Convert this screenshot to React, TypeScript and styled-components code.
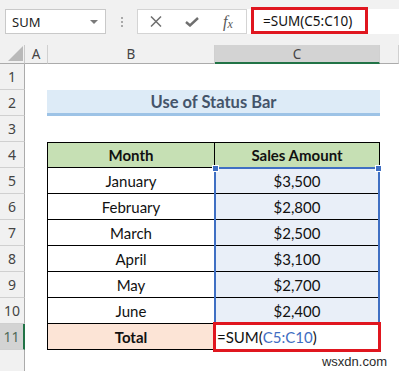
import React from 'react';
import styled, { createGlobalStyle } from 'styled-components';

const GlobalStyle = createGlobalStyle`
  html, body {
    margin: 0;
    padding: 0;
    background: #ffffff;
  }
  body {
    width: 399px;
    height: 371px;
    overflow: hidden;
    font-family: "Noto Sans", "Open Sans", sans-serif;
  }
  * {
    box-sizing: border-box;
  }
`;

const months = [
  { month: 'January', amount: '$3,500' },
  { month: 'February', amount: '$2,800' },
  { month: 'March', amount: '$2,500' },
  { month: 'April', amount: '$3,100' },
  { month: 'May', amount: '$2,700' },
  { month: 'June', amount: '$2,400' },
];

// grid row of a sheet row (grid row 1 is the column header)
const gr = (sheetRow: number) => sheetRow + 1;

const App: React.FC = () => {
  return (
    <>
      <GlobalStyle />
      <Window>
        <FormulaBar>
          <NameBox>
            <NameText>SUM</NameText>
            <DropArrow />
          </NameBox>
          <Grip>
            <Dot />
            <Dot />
            <Dot />
          </Grip>
          <ButtonBox>
            <IconSlot>
              <svg width="12" height="11" viewBox="0 0 12 11">
                <path d="M1 0.5 L11 10.5 M11 0.5 L1 10.5" stroke="#6f6f6f" strokeWidth="1.5" fill="none" />
              </svg>
            </IconSlot>
            <IconSlot>
              <svg width="14" height="10" viewBox="0 0 14 10">
                <path d="M1 5 L5 8.5 L13 1" stroke="#6f6f6f" strokeWidth="2.4" fill="none" />
              </svg>
            </IconSlot>
            <IconSlot>
              <Fx>
                f<FxSub>x</FxSub>
              </Fx>
            </IconSlot>
          </ButtonBox>
          <FormulaInput>
            <FormulaHighlight>=SUM(C5:C10)</FormulaHighlight>
          </FormulaInput>
        </FormulaBar>

        <Sheet>
          <Corner $c={1} $r={1}>
            <svg width="15" height="15" viewBox="0 0 15 15">
              <polygon points="15,0 15,15 0,15" fill="#b9b9b9" />
            </svg>
          </Corner>
          <ColHead $c={2} $r={1}>A</ColHead>
          <ColHead $c={3} $r={1}>B</ColHead>
          <ColHead $c={4} $r={1} $selected>
            C
          </ColHead>
          <ColHead $c={5} $r={1} />

          {Array.from({ length: 11 }, (_, i) => (
            <RowHead key={i} $c={1} $r={gr(i + 1)} $selected={i + 1 === 11}>
              {i + 1}
            </RowHead>
          ))}
          <RowHead $c={1} $r={13} $last />

          <TitleCell $c={3} $r={gr(2)}>
            Use of Status Bar
          </TitleCell>

          <TCell $c={3} $r={gr(4)} $first $top $bold $fill="#c6e0b4">
            Month
          </TCell>
          <TCell $c={4} $r={gr(4)} $top $bold $fill="#c6e0b4">
            Sales Amount
          </TCell>

          {months.map((m, i) => (
            <React.Fragment key={m.month}>
              <TCell $c={3} $r={gr(5 + i)} $first>
                {m.month}
              </TCell>
              <TCell $c={4} $r={gr(5 + i)} $fill="#e9eff8">
                {m.amount}
              </TCell>
            </React.Fragment>
          ))}

          <TCell $c={3} $r={gr(11)} $first $bold $fill="#fce4d6">
            Total
          </TCell>
          <EditCell $c={4} $r={gr(11)}>
            =SUM(<RefText>C5:C10</RefText>)
          </EditCell>

          <RangeFrame $c={4} $r={gr(5)} $span={6}>
            <Handle $side="left" />
            <Handle $side="right" />
          </RangeFrame>

          <Watermark>wsxdn.com</Watermark>
        </Sheet>
      </Window>
    </>
  );
};

type Place = { $c: number; $r: number };

const Window = styled.div`
  width: 399px;
  height: 371px;
  display: flex;
  flex-direction: column;
  background: #ffffff;
`;

const FormulaBar = styled.div`
  height: 45px;
  flex: none;
  display: flex;
  align-items: flex-start;
  padding-top: 9px;
  background: #f1f1f1;
`;

const NameBox = styled.div`
  margin-left: 5px;
  width: 101px;
  height: 25px;
  border: 1px solid #c9c9c9;
  background: #ffffff;
  display: flex;
  align-items: center;
  justify-content: space-between;
  padding: 0 7px 0 6px;
`;

const NameText = styled.span`
  font-size: 13px;
  color: #222222;
`;

const DropArrow = styled.span`
  width: 0;
  height: 0;
  border-left: 4px solid transparent;
  border-right: 4px solid transparent;
  border-top: 4px solid #7a7a7a;
`;

const Grip = styled.div`
  width: 31px;
  height: 25px;
  display: flex;
  flex-direction: column;
  align-items: center;
  justify-content: center;
  gap: 2px;
`;

const Dot = styled.span`
  width: 2px;
  height: 2px;
  background: #a9a9a9;
`;

const ButtonBox = styled.div`
  width: 110px;
  height: 25px;
  background: #ffffff;
  border: 1px solid #d4d4d4;
  display: flex;
`;

const IconSlot = styled.div`
  flex: 1;
  display: flex;
  align-items: center;
  justify-content: center;
`;

const Fx = styled.span`
  font-family: "Liberation Serif", "DejaVu Serif", serif;
  font-style: italic;
  font-size: 16px;
  color: #595959;
  line-height: 1;
`;

const FxSub = styled.span`
  font-size: 12px;
  position: relative;
  top: 1px;
`;

const FormulaInput = styled.div`
  flex: 1;
  height: 25px;
  background: #ffffff;
  padding-left: 4px;
  display: flex;
  align-items: flex-start;
`;

const FormulaHighlight = styled.div`
  margin-top: -2px;
  width: 117px;
  height: 27px;
  border: 3px solid #e0161f;
  padding-left: 9px;
  display: flex;
  align-items: center;
  font-size: 13.5px;
  color: #111111;
`;

const Sheet = styled.div`
  flex: 1;
  position: relative;
  display: grid;
  grid-template-columns: 25px 23px 167px 165px 1fr;
  grid-template-rows: 19px repeat(11, 26px) 1fr;
  background: #ffffff;
`;

const Cell = styled.div<Place>`
  grid-column: ${({ $c }) => $c};
  grid-row: ${({ $r }) => $r};
`;

const Corner = styled(Cell)`
  background: #f1f1f1;
  border-right: 1px solid #c9c9c9;
  border-bottom: 1px solid #ababab;
  display: flex;
  align-items: flex-end;
  justify-content: flex-end;
  padding: 0 1px 2px 0;
`;

const ColHead = styled(Cell)<{ $selected?: boolean }>`
  background: ${({ $selected }) => ($selected ? '#d3d3d3' : '#f1f1f1')};
  border-right: 1px solid #d0d0d0;
  border-bottom: ${({ $selected }) => ($selected ? '2px solid #217346' : '1px solid #ababab')};
  display: flex;
  align-items: center;
  justify-content: center;
  font-size: 13.5px;
  color: #444444;
`;

const RowHead = styled(Cell)<{ $selected?: boolean; $last?: boolean }>`
  background: ${({ $selected }) => ($selected ? '#d3d3d3' : '#f1f1f1')};
  border-right: ${({ $selected }) => ($selected ? '2px solid #217346' : '1px solid #ababab')};
  border-bottom: ${({ $last }) => ($last ? 'none' : '1px solid #d0d0d0')};
  display: flex;
  align-items: center;
  justify-content: center;
  font-size: 14px;
  color: ${({ $selected }) => ($selected ? '#4f6b58' : '#444444')};
`;

const TitleCell = styled(Cell)`
  grid-column: 3 / 5;
  margin-left: -1px;
  background: #ddebf7;
  border-bottom: 3px solid #9dc3e6;
  display: flex;
  align-items: center;
  justify-content: center;
  font-family: Lato, "Open Sans", sans-serif;
  font-weight: 700;
  font-size: 16.5px;
  color: #44546a;
`;

const TCell = styled(Cell)<{ $first?: boolean; $top?: boolean; $bold?: boolean; $fill?: string }>`
  background: ${({ $fill }) => $fill || '#ffffff'};
  border-right: 1px solid #000000;
  border-bottom: 1px solid #000000;
  border-left: ${({ $first }) => ($first ? '1px solid #000000' : 'none')};
  border-top: ${({ $top }) => ($top ? '1px solid #000000' : 'none')};
  margin-left: ${({ $first }) => ($first ? '-1px' : '0')};
  display: flex;
  align-items: center;
  justify-content: center;
  font-family: Lato, "Open Sans", sans-serif;
  font-weight: ${({ $bold }) => ($bold ? 700 : 400)};
  font-size: 15px;
  color: #111111;
`;

const EditCell = styled(Cell)`
  position: relative;
  z-index: 3;
  margin: -2px -1px -2px -2px;
  background: #ffffff;
  border: 3px solid #e0161f;
  padding-left: 1px;
  display: flex;
  align-items: center;
  font-family: Lato, "Open Sans", sans-serif;
  font-size: 15px;
  color: #111111;
`;

const RefText = styled.span`
  color: #3e6dc2;
`;

const RangeFrame = styled(Cell)<{ $span: number }>`
  grid-row: ${({ $r, $span }) => `${$r} / span ${$span}`};
  position: relative;
  z-index: 2;
  margin: -1px 0 -1px -1px;
  border: 2px solid #3f6fc3;
  pointer-events: none;
`;

const Handle = styled.span<{ $side: 'left' | 'right' }>`
  position: absolute;
  top: -4px;
  ${({ $side }) => ($side === 'left' ? 'left: -4px;' : 'right: -4px;')}
  width: 7px;
  height: 7px;
  background: #3f6fc3;
  border: 1px solid #ffffff;
`;

const Watermark = styled.div`
  position: absolute;
  right: 12px;
  bottom: 2px;
  font-family: "Liberation Sans", Arial, sans-serif;
  font-size: 13px;
  color: #2a2a2a;
`;

export default App;
